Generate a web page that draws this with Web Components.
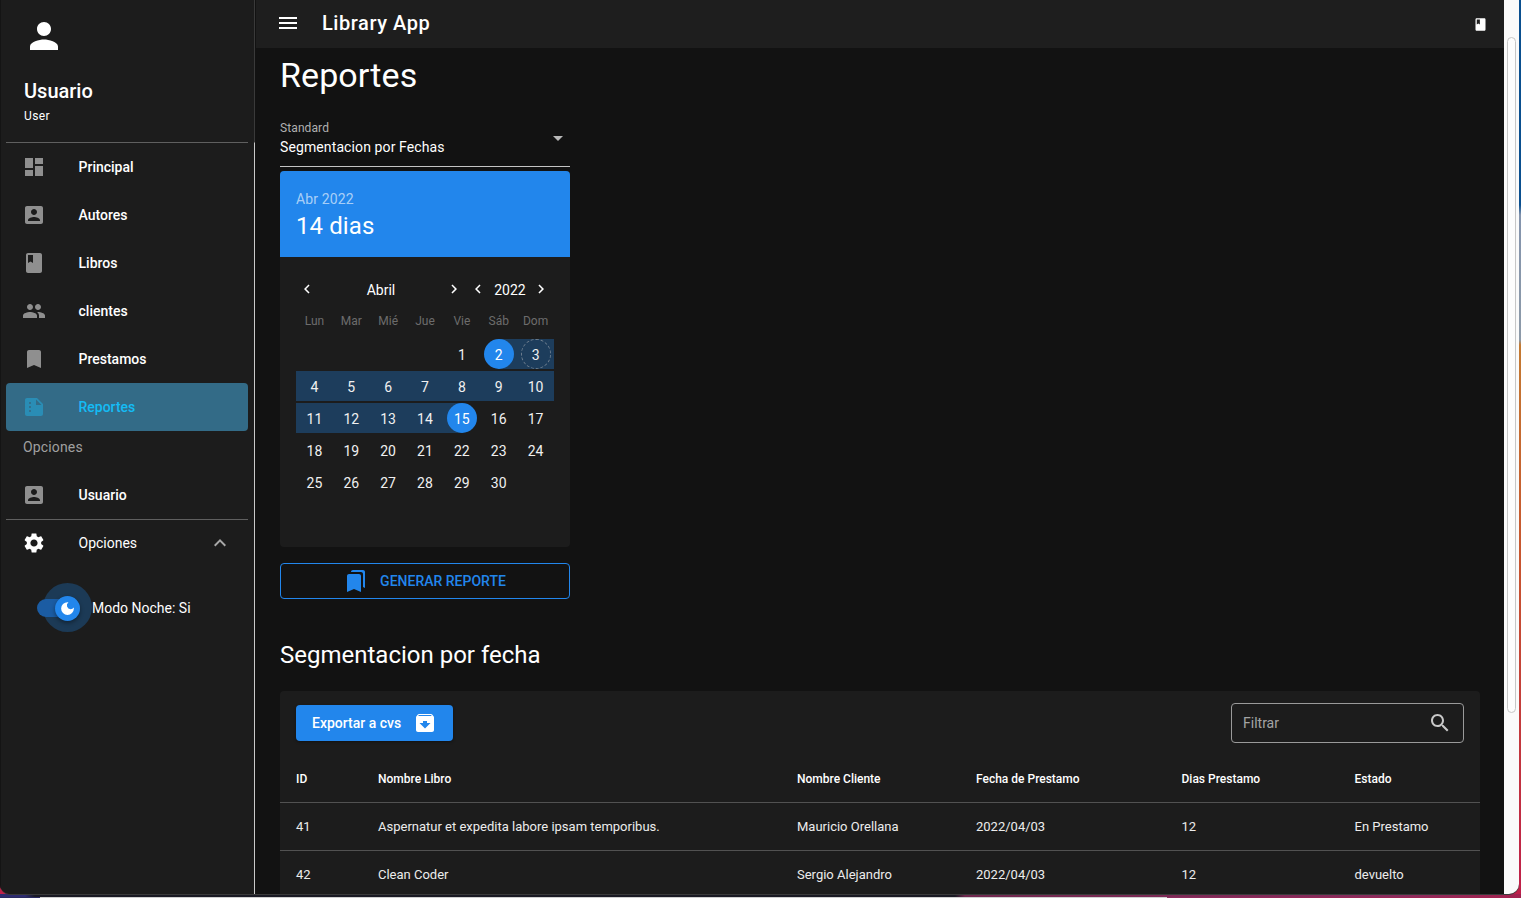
<!DOCTYPE html>
<html lang="es">
<head>
<meta charset="utf-8">
<title>Library App</title>
<style>
html,body{margin:0;height:100%;overflow:hidden}
body{font-family:Roboto,"Liberation Sans",sans-serif;color:#fff;
background:
 linear-gradient(90deg,#2a2a60 0,#2a2a60 40px,#cfcfcf 40px,#cfcfcf 1167px,#8a2c5e 1167px,#a3224f 100%) bottom/100% 1px no-repeat,
 linear-gradient(90deg,#2e2c70 0,#2e2c70 25px,#1a1a24 35px,#1a1a24 955px,#70284f 965px,#8a2c5e 1400px,#a3224f 100%) bottom/100% 4px no-repeat,
 linear-gradient(180deg,#0a4f8f 0,#0a4f8f 205px,#8494ad 215px,#8d9aa8 340px,#c47a32 345px,#c8552f 560px,#bf1f4a 100%);}
</style>
</head>
<body>
<lib-app></lib-app>
<script>
const P={
person:'M12 12c2.21 0 4-1.79 4-4s-1.79-4-4-4-4 1.79-4 4 1.79 4 4 4zm0 2c-2.67 0-8 1.34-8 4v2h16v-2c0-2.66-5.33-4-8-4z',
dashboard:'M3 13h8V3H3v10zm0 8h8v-6H3v6zm10 0h8V11h-8v10zm0-18v6h8V3h-8z',
accountbox:'M3 5v14c0 1.1.89 2 2 2h14c1.1 0 2-.9 2-2V5c0-1.1-.9-2-2-2H5c-1.11 0-2 .9-2 2zm12 4c0 1.66-1.34 3-3 3s-3-1.34-3-3 1.34-3 3-3 3 1.34 3 3zm-9 8c0-2 4-3.1 6-3.1s6 1.1 6 3.1v1H6v-1z',
book:'M18 2H6c-1.1 0-2 .9-2 2v16c0 1.1.9 2 2 2h12c1.1 0 2-.9 2-2V4c0-1.1-.9-2-2-2zM6 4h5v8l-2.5-1.5L6 12V4z',
people:'M16 11c1.66 0 2.99-1.34 2.99-3S17.66 5 16 5c-1.66 0-3 1.34-3 3s1.34 3 3 3zm-8 0c1.66 0 2.99-1.34 2.99-3S9.66 5 8 5C6.34 5 5 6.34 5 8s1.34 3 3 3zm0 2c-2.33 0-7 1.17-7 3.5V19h14v-2.5c0-2.33-4.67-3.5-7-3.5zm8 0c-.29 0-.62.02-.97.05 1.16.84 1.97 1.97 1.97 3.45V19h6v-2.5c0-2.33-4.67-3.5-7-3.5z',
bookmark:'M17 3H7c-1.1 0-1.99.9-1.99 2L5 21l7-3 7 3V5c0-1.1-.9-2-2-2z',
summarize:'M15 3H5c-1.1 0-1.99.9-1.99 2L3 19c0 1.1.89 2 1.99 2H19c1.1 0 2-.9 2-2V9l-6-6zM8 17c-.55 0-1-.45-1-1s.45-1 1-1 1 .45 1 1-.45 1-1 1zm0-4c-.55 0-1-.45-1-1s.45-1 1-1 1 .45 1 1-.45 1-1 1zm0-4c-.55 0-1-.45-1-1s.45-1 1-1 1 .45 1 1-.45 1-1 1zm6 1V4.5l5.5 5.5H14z',
settings:'M19.14 12.94c.04-.3.06-.61.06-.94 0-.32-.02-.64-.07-.94l2.03-1.58c.18-.14.23-.41.12-.61l-1.92-3.32c-.12-.22-.37-.29-.59-.22l-2.39.96c-.5-.38-1.03-.7-1.62-.94l-.36-2.54c-.04-.24-.24-.41-.48-.41h-3.84c-.24 0-.43.17-.47.41l-.36 2.54c-.59.24-1.13.57-1.62.94l-2.39-.96c-.22-.08-.47 0-.59.22L2.74 8.87c-.12.21-.08.47.12.61l2.03 1.58c-.05.3-.09.63-.09.94s.02.64.07.94l-2.03 1.58c-.18.14-.23.41-.12.61l1.92 3.32c.12.22.37.29.59.22l2.39-.96c.5.38 1.03.7 1.62.94l.36 2.54c.05.24.24.41.48.41h3.84c.24 0 .44-.17.47-.41l.36-2.54c.59-.24 1.13-.56 1.62-.94l2.39.96c.22.08.47 0 .59-.22l1.92-3.32c.12-.22.07-.47-.12-.61l-2.01-1.58zM12 15.6c-1.98 0-3.6-1.62-3.6-3.6s1.62-3.6 3.6-3.6 3.6 1.62 3.6 3.6-1.62 3.6-3.6 3.6z',
expandless:'M12 8l-6 6 1.41 1.41L12 10.83l4.59 4.58L18 14z',
menu:'M3 18h18v-2H3v2zm0-5h18v-2H3v2zm0-7v2h18V6H3z',
search:'M15.5 14h-.79l-.28-.27C15.41 12.59 16 11.11 16 9.5 16 5.91 13.09 3 9.5 3S3 5.91 3 9.5 5.91 16 9.5 16c1.61 0 3.09-.59 4.23-1.57l.27.28v.79l5 4.99L20.49 19l-4.99-5zm-6 0C7.01 14 5 11.99 5 9.5S7.01 5 9.5 5 14 7.01 14 9.5 11.99 14 9.5 14z',
bookmarks:'M19 18l2 1V3c0-1.1-.9-2-2-2H8.99C7.89 1 7 1.9 7 3h10c1.1 0 2 .9 2 2v13zM15 5H5c-1.1 0-2 .9-2 2v16l7-3 7 3V7c0-1.1-.9-2-2-2z',
archive:'M20.54 5.23l-1.39-1.68C18.88 3.21 18.47 3 18 3H6c-.47 0-.88.21-1.16.55L3.46 5.23C3.17 5.57 3 6.02 3 6.5V19c0 1.1.9 2 2 2h14c1.1 0 2-.9 2-2V6.5c0-.48-.17-.93-.46-1.27zM12 17.5L6.5 12H10v-2h4v2h3.5L12 17.5zM5.12 5l.81-1h12l.94 1H5.12z',
left:'M15.41 16.59L10.83 12l4.58-4.59L14 6l-6 6 6 6 1.41-1.41z',
right:'M8.59 16.59L13.17 12 8.59 7.41 10 6l6 6-6 6-1.41-1.41z',
moon:'M12 3a9 9 0 1 0 9 9c0-.46-.04-.92-.1-1.36a5.389 5.389 0 0 1-4.4 2.26 5.403 5.403 0 0 1-3.14-9.8c-.44-.06-.9-.1-1.36-.1z',
caret:'M7 10l5 5 5-5z'
};
function el(name,render){
  customElements.define(name,class extends HTMLElement{
    connectedCallback(){
      if(this.shadowRoot)return;
      this.attachShadow({mode:'open'}).innerHTML=render.call(this);
    }
  });
}
el('lib-icon',function(){
  const s=this.getAttribute('size')||24;
  return `<style>:host{display:inline-flex;flex:none;width:${s}px;height:${s}px;color:inherit}svg{display:block;width:100%;height:100%;fill:currentColor}</style><svg viewBox="0 0 24 24" aria-hidden="true"><path d="${P[this.getAttribute('name')]}"/></svg>`;
});
el('lib-app',function(){
  return `<style>
  :host{display:block;width:1519px;height:894px}
  .win{display:flex;height:100%;border-radius:0 0 10px 10px;overflow:hidden;background:#121212}
  .wrap{height:100%;border-radius:0 0 10px 10px;box-shadow:0 1px 0 #3a3a3a}
  .main{flex:1;min-width:0;display:flex;flex-direction:column;overflow:hidden;border-left:1px solid #121212}
  .page{flex:1;min-height:0;overflow:hidden;padding:0 24px}
  lib-scroll{flex:none}
  </style>
  <div class="wrap"><div class="win">
    <lib-sidebar></lib-sidebar>
    <div class="main">
      <lib-appbar></lib-appbar>
      <div class="page"><lib-reports></lib-reports></div>
    </div>
    <lib-scroll></lib-scroll>
  </div></div>`;
});
el('lib-scroll',function(){
  return `<style>:host{display:block;width:15px;height:100%;background:#fafafa;padding:37px 3px 0;box-sizing:border-box}
  div{width:9px;height:676px;box-sizing:border-box;border:1px solid #c6c6c6;border-radius:5px;background:#fdfdfd}</style><div></div>`;
});
el('lib-sidebar',function(){
  const items=[['dashboard','Principal'],['accountbox','Autores'],['book','Libros'],['people','clientes'],['bookmark','Prestamos']];
  return `<style>
  :host{display:block;flex:none;width:255px;height:100%;box-sizing:border-box;background:#1c1c1c;padding-left:6px;position:relative;font-size:14px;box-shadow:inset 1px 0 0 #141414}
  .edge{position:absolute;right:0;top:0;bottom:0;width:1px;background:linear-gradient(180deg,#3a3a3a 0,#3a3a3a 142px,#c9c9c9 143px)}
  .side{width:242px}
  .head{height:142px;box-sizing:border-box;padding:15px 0 0 17px}
  .who{margin:0 0 0 1px}
  .name{font-size:20px;font-weight:500;line-height:24px;margin-top:19px}
  .role{font-size:12px;line-height:16px;margin-top:5px;letter-spacing:.4px}
  hr{border:0;height:1px;background:#5f5f5f;margin:0}
  .sub{height:40px;line-height:32px;padding-left:17px;color:#a0a0a0;letter-spacing:.15px}
  .mode{display:flex;align-items:center;margin:17px 0 0 31px;height:48px}
  .mode span{margin-left:12px}
  </style>
  <div class="edge"></div>
  <div class="side">
    <div class="head"><lib-icon name="person" size="42"></lib-icon>
      <div class="who"><div class="name">Usuario</div><div class="role">User</div></div>
    </div>
    <hr>
    ${items.map(i=>`<lib-nav icon="${i[0]}">${i[1]}</lib-nav>`).join('')}
    <lib-nav icon="summarize" selected>Reportes</lib-nav>
    <div class="sub">Opciones</div>
    <lib-nav icon="accountbox">Usuario</lib-nav>
    <hr style="margin-bottom:-1px">
    <lib-nav icon="settings" plain expand>Opciones</lib-nav>
    <div class="mode"><lib-switch></lib-switch><span>Modo Noche: Si</span></div>
  </div>`;
});
el('lib-nav',function(){
  const sel=this.hasAttribute('selected'),plain=this.hasAttribute('plain');
  return `<style>
  :host{display:flex;align-items:center;height:48px;box-sizing:border-box;padding-left:16px;border-radius:4px;font-size:14px;font-weight:${plain?400:500};color:#fff;
    ${sel?'background:#336b87;color:#14bcf5;':''}}
  .ic{width:56px;display:flex;color:${plain?'#fff':(sel?'#2a8db5':'#8f8f8f')}}
  .t{flex:1;padding-left:.5px}
  .x{margin-right:16px;color:#a8a8a8;display:flex}
  </style>
  <div class="ic"><lib-icon name="${this.getAttribute('icon')}"></lib-icon></div>
  <div class="t"><slot></slot></div>
  ${this.hasAttribute('expand')?'<div class="x"><lib-icon name="expandless"></lib-icon></div>':''}`;
});
el('lib-switch',function(){
  return `<style>
  :host{display:block;position:relative;width:43px;height:18px}
  .halo{position:absolute;left:5.5px;top:-16px;width:49px;height:49px;border-radius:50%;background:#1c3a56}
  .track{position:absolute;inset:0;border-radius:9px;background:#1b5ca3}
  .thumb{position:absolute;left:17.5px;top:-3.5px;width:25px;height:25px;border-radius:50%;background:#2286ec;color:#fff;display:flex;align-items:center;justify-content:center;box-shadow:0 2px 4px rgba(0,0,0,.4)}
  </style><div class="halo"></div><div class="track"></div><div class="thumb"><lib-icon name="moon" size="17"></lib-icon></div>`;
});
el('lib-appbar',function(){
  return `<style>
  :host{display:flex;align-items:center;flex:none;height:48px;background:#1e1e1e;padding:0 16px 2px 20px;box-sizing:border-box;color:#fff}
  .t{font-size:20px;font-weight:500;margin-left:22px;flex:1;line-height:24px;letter-spacing:.55px}
  .b{margin-top:2px}
  </style>
  <lib-icon name="menu"></lib-icon><div class="t">Library App</div>
  <lib-icon class="b" name="book" size="15"></lib-icon>`;
});
el('lib-reports',function(){
  return `<style>
  :host{display:block}
  h1{font-size:34px;font-weight:400;line-height:40px;margin:7px 0 0;letter-spacing:.1px}
  .col{width:290px}
  h2{font-size:24px;font-weight:400;line-height:32px;margin:40px 0 20px}
  lib-calendar{margin-top:4px}
  lib-outline{margin-top:16px}
  </style>
  <h1>Reportes</h1>
  <div class="col">
    <lib-select label="Standard" value="Segmentacion por Fechas"></lib-select>
    <lib-calendar></lib-calendar>
    <lib-outline>GENERAR REPORTE</lib-outline>
  </div>
  <h2>Segmentacion por fecha</h2>
  <lib-table></lib-table>`;
});
el('lib-select',function(){
  return `<style>
  :host{display:block;height:72px;box-sizing:border-box;padding-top:25px}
  .b{position:relative;border-bottom:1px solid #c4c4c4;height:47px;box-sizing:border-box}
  .l{font-size:12px;line-height:16px;color:#b0b0b0;letter-spacing:.1px}
  .v{font-size:14px;line-height:20px;margin-top:1px;letter-spacing:.11px}
  lib-icon{position:absolute;right:0;top:6px;color:#b8b8b8}
  </style>
  <div class="b"><div class="l">${this.getAttribute('label')}</div><div class="v">${this.getAttribute('value')}</div><lib-icon name="caret"></lib-icon></div>`;
});
el('lib-calendar',function(){
  const days=['Lun','Mar','Mié','Jue','Vie','Sáb','Dom'];
  let cells='<div></div><div></div><div></div><div></div>';
  for(let d=1;d<=30;d++){
    let c='d';
    if(d===2)c+=' sel start';
    else if(d===15)c+=' sel end';
    else if(d>2&&d<15)c+=' band';
    if(d===3)c+=' today';
    cells+=`<div class="${c}"><span>${d}</span></div>`;
  }
  return `<style>
  :host{display:block;background:#1c1c1c;border-radius:4px;height:376px;overflow:hidden}
  .hd{background:#2286ec;height:86px;box-sizing:border-box;padding:20px 16px 0}
  .y{font-size:14px;line-height:16px;color:rgba(255,255,255,.62);letter-spacing:.12px}
  .r{font-size:24px;line-height:28px;margin-top:5px;letter-spacing:.1px}
  .nav{display:flex;align-items:center;height:32px;margin-top:16px;padding:0 20px 0 18px;font-size:14px;gap:6px}
  .nav div{display:flex;align-items:center}
  .nav span{margin:2px 0 0 1px}
  .m{width:165px;justify-content:space-between}
  .yr{width:81px;justify-content:space-between}
  .w,.g{display:grid;grid-template-columns:repeat(7,1fr);margin:0 16px;text-align:center}
  .w{font-size:12px;color:#6c6c6c;line-height:16px;margin-top:8px;margin-bottom:10px}
  .g{grid-auto-rows:30px;row-gap:2px;font-size:14px;color:#f0f0f0}
  .d{display:flex;align-items:center;justify-content:center}
  .d span{width:30px;height:30px;line-height:33px;border-radius:50%;box-sizing:border-box}
  .band{background:#1d3d5c}
  .start{background:linear-gradient(90deg,transparent 50%,#1d3d5c 50%)}
  .end{background:linear-gradient(90deg,#1d3d5c 50%,transparent 50%)}
  .sel span{background:#2286ec;color:#fff}
  .today span{border:1px dashed #6f7f8f;line-height:31px}
  </style>
  <div class="hd"><div class="y">Abr 2022</div><div class="r">14 dias</div></div>
  <div class="nav">
    <div class="m"><lib-icon name="left" size="18"></lib-icon><span>Abril</span><lib-icon name="right" size="18"></lib-icon></div>
    <div class="yr"><lib-icon name="left" size="18"></lib-icon><span>2022</span><lib-icon name="right" size="18"></lib-icon></div>
  </div>
  <div class="w">${days.map(d=>`<div>${d}</div>`).join('')}</div>
  <div class="g">${cells}</div>`;
});
el('lib-outline',function(){
  return `<style>
  :host{display:flex;align-items:center;justify-content:center;height:36px;box-sizing:border-box;border:1px solid #2286ec;border-radius:4px;color:#2286ec;font-size:14px;font-weight:500}
  lib-icon{margin-right:12px}
  </style><lib-icon name="bookmarks"></lib-icon><slot></slot>`;
});
el('lib-table',function(){
  const head=['ID','Nombre Libro','Nombre Cliente','Fecha de Prestamo','Dias Prestamo','Estado'];
  const rows=[['41','Aspernatur et expedita labore ipsam temporibus.','Mauricio Orellana','2022/04/03','12','En Prestamo'],
              ['42','Clean Coder','Sergio Alejandro','2022/04/03','12','devuelto']];
  const row=(r,c)=>`<div class="row ${c}">${r.map(x=>`<div>${x}</div>`).join('')}</div>`;
  return `<style>
  :host{display:block;background:#1c1c1c;border-radius:4px 4px 0 0}
  .tb{display:flex;align-items:center;justify-content:space-between;height:64px;padding:0 16px}
  .btn{display:flex;align-items:center;height:36px;width:157px;box-sizing:border-box;padding-left:16px;background:#2286ec;border-radius:4px;font-size:14px;font-weight:500;box-shadow:0 1px 3px rgba(0,0,0,.4)}
  .btn lib-icon{margin-left:12px}
  .f{display:flex;align-items:center;justify-content:space-between;width:233px;height:40px;box-sizing:border-box;border:1px solid #9a9a9a;border-radius:4px;padding:0 11px;font-size:14px;color:#a4a4a4}
  .f lib-icon{color:#c8c8c8}
  .row{display:grid;grid-template-columns:82px 419px 179px 205.5px 173px 1fr;align-items:center;height:48px;padding-left:16px;border-bottom:1px solid #515151;box-sizing:border-box;font-size:13px;color:#ececec}
  .th{font-size:12px;font-weight:500;color:#fff}
  </style>
  <div class="tb"><div class="btn">Exportar a cvs<lib-icon name="archive"></lib-icon></div>
  <div class="f"><span>Filtrar</span><lib-icon name="search"></lib-icon></div></div>
  ${row(head,'th')}${rows.map(r=>row(r,'')).join('')}`;
});
</script>
</body>
</html>
